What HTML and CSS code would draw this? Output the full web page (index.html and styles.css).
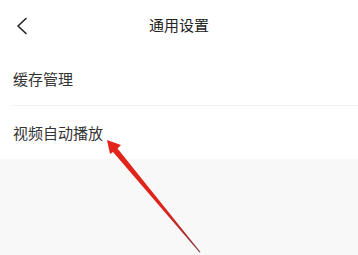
FILE: index.html
```html
<!DOCTYPE html>
<html lang="zh">
<head>
<meta charset="utf-8">
<link rel="stylesheet" href="styles.css">
</head>
<body>
<div class="page">
  <header class="nav">
    <svg class="back" width="12" height="18" viewBox="0 0 12 18"><path d="M10 1.5 L2 9 L10 16.5" fill="none" stroke="#222" stroke-width="1.6" stroke-linecap="round" stroke-linejoin="round"/></svg>
    <div class="title">通用设置</div>
  </header>
  <div class="list">
    <div class="row first"><span class="label">缓存管理</span></div>
    <div class="row"><span class="label">视频自动播放</span></div>
  </div>
  <div class="rest"></div>
  <svg class="arrow" width="358" height="255" viewBox="0 0 358 255">
    <defs>
      <linearGradient id="g" x1="107" y1="140" x2="200" y2="252" gradientUnits="userSpaceOnUse">
        <stop offset="0" stop-color="#e3241a"/>
        <stop offset="0.6" stop-color="#dd2418"/>
        <stop offset="1" stop-color="#8a3a44"/>
      </linearGradient>
    </defs>
    <path d="M107 140 L121 145 L117.5 148.5 L200.5 252 L199.5 252.5 L113 152 L110 154 Z" fill="url(#g)"/>
  </svg>
</div>
</body>
</html>
```
FILE: styles.css
```css
html, body {
  margin: 0;
  padding: 0;
}
body {
  background: #f8f8f8;
  font-family: "Noto Sans CJK SC", "Noto Sans", sans-serif;
}
.page {
  position: relative;
  width: 358px;
  height: 255px;
  overflow: hidden;
}
.nav {
  position: relative;
  height: 52px;
  background: #fff;
  display: flex;
  align-items: center;
  justify-content: center;
}
.back {
  position: absolute;
  left: 16px;
  top: 17px;
}
.title {
  font-size: 15px;
  color: #222;
  line-height: 20px;
  margin-top: -2px;
}
.list {
  background: #fff;
  padding-left: 13px;
}
.row {
  height: 53px;
  display: flex;
  align-items: center;
}
.row.first {
  border-bottom: 1px solid #f2f2f2;
}
.label {
  font-size: 15px;
  color: #333;
  line-height: 20px;
}
.arrow {
  position: absolute;
  left: 0;
  top: 0;
  pointer-events: none;
}
```
